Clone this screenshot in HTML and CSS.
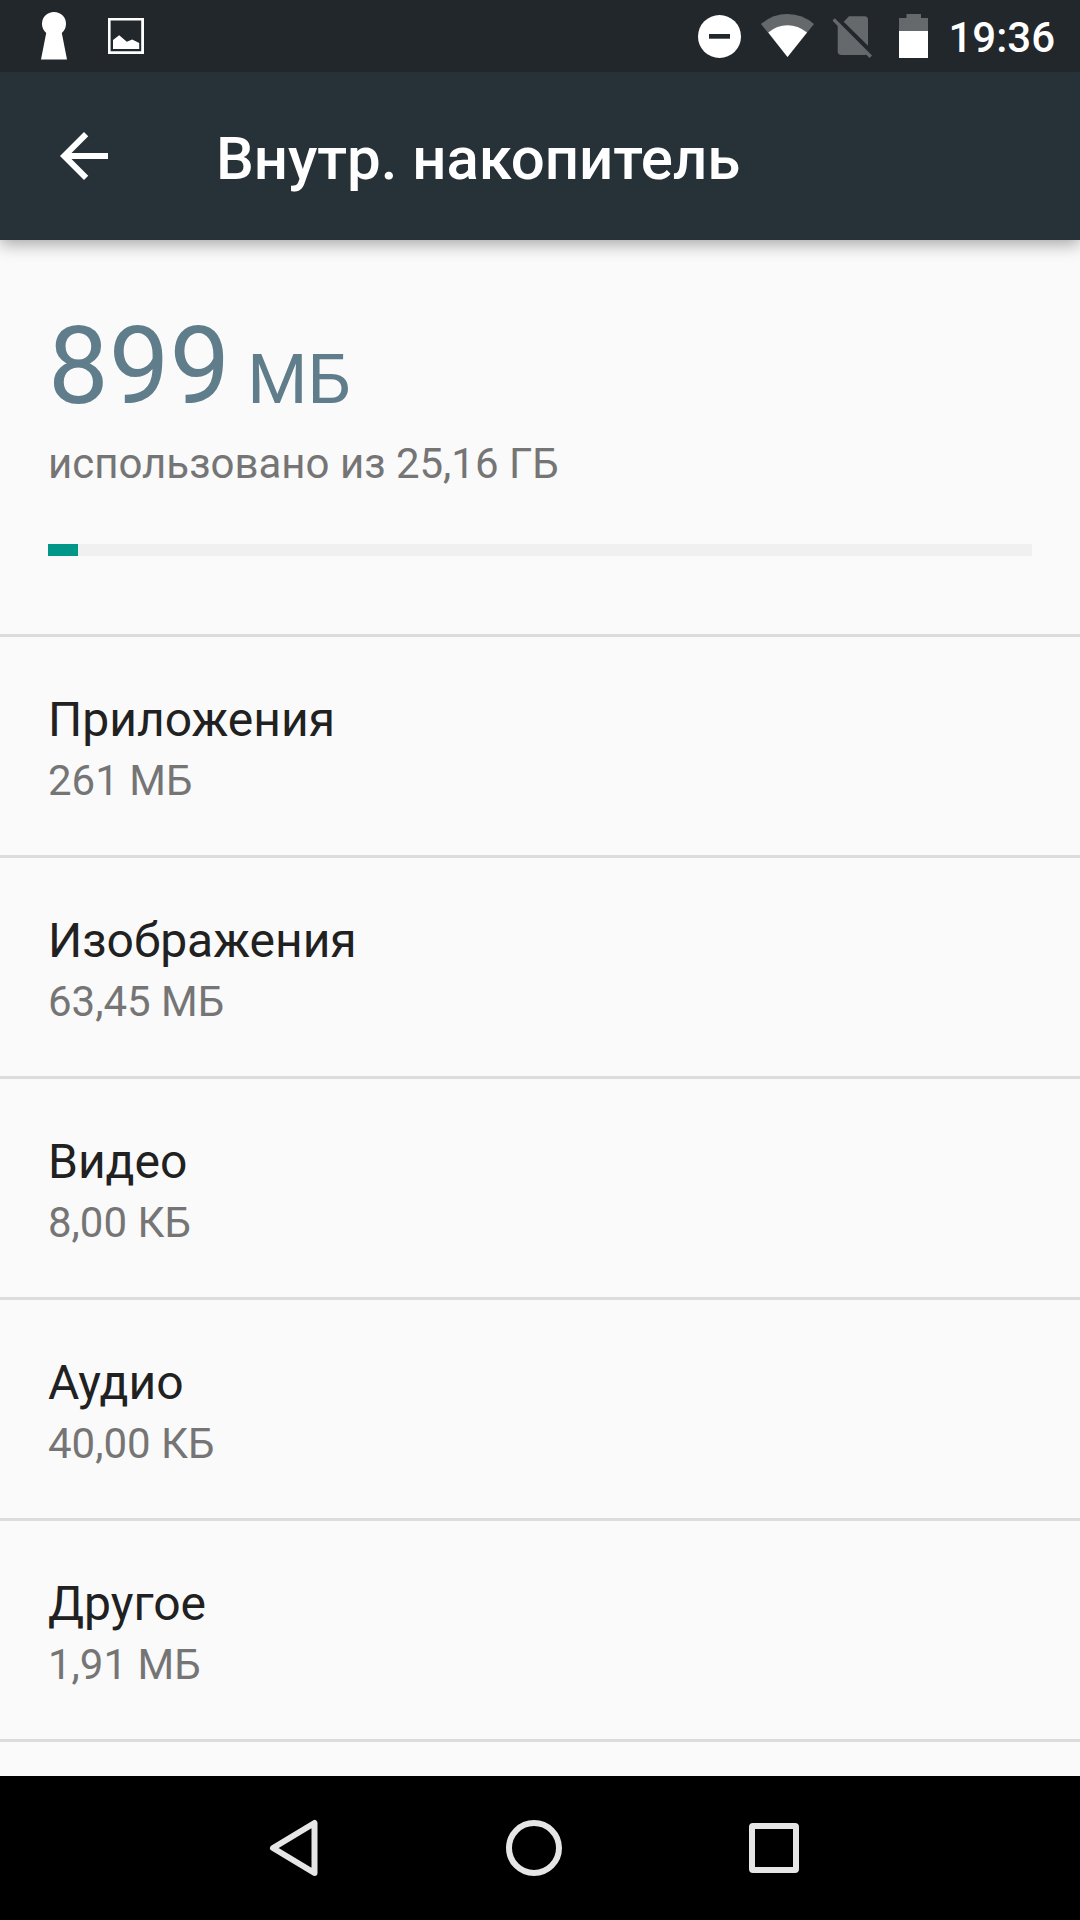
FILE: index.html
```
<!DOCTYPE html>
<html lang="ru">
  <head>
    <meta charset="UTF-8" />
    <meta name="viewport" content="width=device-width, initial-scale=1.0" />
    <title>Внутр. накопитель</title>
    <link rel="stylesheet" href="styles.css">
  </head>
  <body>
    <div class="status-bar">
      <svg class="icon-key" width="28" height="72" viewBox="40 0 28 72">
        <path d="M46.2 33A12 12 0 1 1 61.8 33L67 59.6H41z" />
      </svg>
      <svg class="icon-image" width="36" height="72" viewBox="108 0 36 72">
        <path fill-rule="evenodd" d="M108 18h36v36h-36zM110.6 20.6v30.6h30.6V20.6z" />
        <path d="M113 40l6.2-4.8 7.6 6.6 5.4-2.4 7 3.7v5.8H113z" />
      </svg>
      <div class="status-right">
        <svg width="44" height="72" viewBox="698 0 44 72">
          <circle cx="719.5" cy="36.5" r="21.5" />
          <rect class="cutout" x="709" y="34" width="21" height="4.7" />
        </svg>
        <svg class="icon-wifi" width="54" height="72" viewBox="761 0 54 72">
          <path class="dim" d="M761 24Q772.500 14 787.500 14T814 24L787.500 57z" />
          <path d="M768.300 32.500Q777 25.300 787.500 25.300T807 32.500L787.500 57z" />
        </svg>
        <svg class="icon-sim" width="40" height="72" viewBox="832 0 40 72">
          <path class="dim" d="M843.700 21.800L849 16.300H864.500Q868 16.300 868 20V45.700z" />
          <path class="dim" d="M832.500 20.500L834.800 18.300L872 55.600L869.700 58L866 54.500Q865.500 55 864 55H841.500Q837.700 55 837.700 51.200V26z" />
        </svg>
        <svg class="icon-battery" width="30" height="72" viewBox="899 0 30 72">
          <path class="dim" d="M899 18h7.500v-4h14.500v4h7v13h-29z" />
          <path d="M899 31h29v27h-29z" />
        </svg>
        <span class="clock">19:36</span>
      </div>
    </div>

    <header class="toolbar">
      <svg class="back" width="72" height="72" viewBox="0 0 24 24">
        <path d="M20 11H7.830l5.590-5.590L12 4l-8 8 8 8 1.410-1.410L7.830 13H20v-2z" />
      </svg>
      <h1>Внутр. накопитель</h1>
    </header>

    <main>
      <section class="summary">
        <div class="used">899<small> МБ</small></div>
        <p class="total">использовано из 25,16 ГБ</p>
        <div class="progress">
          <div class="progress-fill"></div>
        </div>
      </section>

      <div class="item">
        <h2>Приложения</h2>
        <p>261 МБ</p>
      </div>
      <div class="item">
        <h2>Изображения</h2>
        <p>63,45 МБ</p>
      </div>
      <div class="item">
        <h2>Видео</h2>
        <p>8,00 КБ</p>
      </div>
      <div class="item">
        <h2>Аудио</h2>
        <p>40,00 КБ</p>
      </div>
      <div class="item">
        <h2>Другое</h2>
        <p>1,91 МБ</p>
      </div>
    </main>

    <nav class="nav-bar">
      <svg width="56" height="60" viewBox="0 0 56 60">
        <path d="M46.500 5V55L5 30z" />
      </svg>
      <svg width="60" height="60" viewBox="0 0 60 60">
        <circle cx="30" cy="30" r="25" />
      </svg>
      <svg width="60" height="60" viewBox="0 0 60 60">
        <rect x="8" y="8" width="44" height="44" rx="1" />
      </svg>
    </nav>
  </body>
</html>
```
FILE: styles.css
```
* {
  box-sizing: border-box;
}
body {
  font-family: Roboto, sans-serif;
  margin: 0;
  height: 1920px;
  display: flex;
  flex-direction: column;
  background-color: #fafafa;
  overflow: hidden;
}
h1,
h2,
p {
  margin: 0;
  font-weight: 400;
}
svg {
  display: block;
  flex: none;
}

/* Status bar */
.status-bar {
  display: flex;
  height: 72px;
  padding: 0 25px 0 40px;
  background-color: #22272b;
  fill: #fff;
  z-index: 2;
}
.icon-image {
  margin-left: 40px;
}
.status-right {
  display: flex;
  margin-left: auto;
}
.icon-wifi {
  margin-left: 19px;
}
.icon-sim {
  margin-left: 17px;
}
.icon-battery {
  margin-left: 27px;
}
.dim {
  fill: #65696b;
}
.cutout {
  fill: #22272b;
}
.clock {
  margin-left: 19px;
  color: #fff;
  font-size: 42px;
  font-weight: 500;
  line-height: 76px;
}

/* Toolbar */
.toolbar {
  display: flex;
  align-items: center;
  height: 168px;
  padding-left: 48px;
  background-color: #263238;
  color: #fff;
  box-shadow: 0 4px 16px rgba(0, 0, 0, 0.35);
  z-index: 1;
}
.back {
  fill: #fff;
}
.toolbar h1 {
  margin-left: 96px;
  padding-top: 6px;
  font-size: 60px;
  font-weight: 500;
  line-height: 70px;
  letter-spacing: -0.06px;
}

/* Storage content */
main {
  flex: 1;
}
.summary {
  height: 397px;
  padding: 61px 48px 0;
  border-bottom: 3px solid #dcdcdc;
}
.used {
  height: 130px;
  color: #607d8b;
  font-size: 108px;
  line-height: 130px;
}
.used small {
  font-size: 69px;
  line-height: 1;
}
.total {
  margin-top: 8px;
  color: #757575;
  font-size: 42px;
  line-height: 50px;
}
.progress {
  height: 12px;
  margin-top: 55px;
  background-color: #f0f0f0;
}
.progress-fill {
  width: 30px;
  height: 100%;
  background-color: #009688;
}
.item {
  height: 221px;
  padding: 55px 48px 0;
  border-bottom: 3px solid #dcdcdc;
}
.item h2 {
  color: #212121;
  font-size: 48px;
  line-height: 56px;
}
.item p {
  margin-top: 8px;
  color: #757575;
  font-size: 42px;
  line-height: 50px;
}

/* Navigation buttons */
.nav-bar {
  display: flex;
  align-items: center;
  height: 144px;
  padding-left: 268px;
  background-color: #000;
  fill: none;
  stroke: #e6e6e6;
  stroke-width: 6;
  stroke-linejoin: round;
}
.nav-bar svg:nth-child(2) {
  margin-left: 180px;
}
.nav-bar svg:nth-child(3) {
  margin-left: 180px;
}
```
